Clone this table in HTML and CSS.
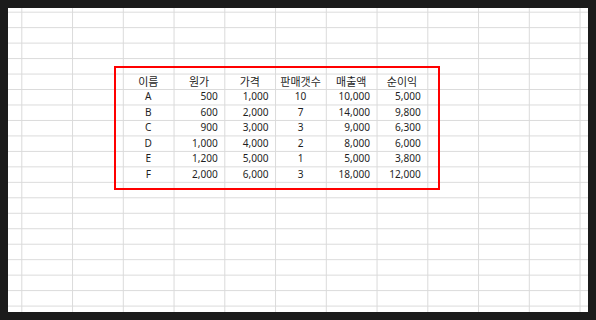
FILE: index.html
```html
<!DOCTYPE html>
<html lang="ko">
<head>
<meta charset="utf-8">
<title>Sheet</title>
<link rel="stylesheet" href="styles.css">
</head>
<body>
<div class="sheet">
  <div class="frame">
    <div class="table">
      <div class="c h">이름</div><div class="c h">원가</div><div class="c h">가격</div><div class="c h">판매갯수</div><div class="c h">매출액</div><div class="c h">순이익</div>
      <div class="c m">A</div><div class="c r">500</div><div class="c r">1,000</div><div class="c m">10</div><div class="c r">10,000</div><div class="c r">5,000</div>
      <div class="c m">B</div><div class="c r">600</div><div class="c r">2,000</div><div class="c m">7</div><div class="c r">14,000</div><div class="c r">9,800</div>
      <div class="c m">C</div><div class="c r">900</div><div class="c r">3,000</div><div class="c m">3</div><div class="c r">9,000</div><div class="c r">6,300</div>
      <div class="c m">D</div><div class="c r">1,000</div><div class="c r">4,000</div><div class="c m">2</div><div class="c r">8,000</div><div class="c r">6,000</div>
      <div class="c m">E</div><div class="c r">1,200</div><div class="c r">5,000</div><div class="c m">1</div><div class="c r">5,000</div><div class="c r">3,800</div>
      <div class="c m">F</div><div class="c r">2,000</div><div class="c r">6,000</div><div class="c m">3</div><div class="c r">18,000</div><div class="c r">12,000</div>
    </div>
  </div>
</div>
</body>
</html>
```

FILE: styles.css
```css
html {
  background: #1b1b1b;
}
body {
  margin: 8px;
  height: 304px;
  overflow: hidden;
  font-family: "Noto Sans", "Noto Sans CJK KR", sans-serif;
  font-size: 10.1px;
  color: #1f1f1f;
}
.sheet {
  height: 304px;
  background-color: #ffffff;
  background-image:
    linear-gradient(to right, #dadada 1px, transparent 1px),
    linear-gradient(to bottom, #dadada 1px, transparent 1px);
  background-size: 50.75px 100%, 100% 15.47px;
  background-position: 13.3px 0, 0 3.7px;
  padding-top: 58px;
  box-sizing: border-box;
}
.frame {
  margin-left: 106px;
  width: 304.5px;
  border: 2px solid #ff0000;
  padding: 5.3px 10.5px 6.4px 6.9px;
}
.table {
  display: grid;
  grid-template-columns: repeat(6, 50.75px);
  grid-auto-rows: 15.47px;
}
.c {
  display: flex;
  align-items: center;
  white-space: nowrap;
  line-height: 1;
}
.h, .m {
  justify-content: center;
}
.r {
  justify-content: flex-end;
  padding-right: 6.5px;
}
.h {
  font-family: "Noto Sans CJK KR", sans-serif;
  font-size: 11px;
}
```
